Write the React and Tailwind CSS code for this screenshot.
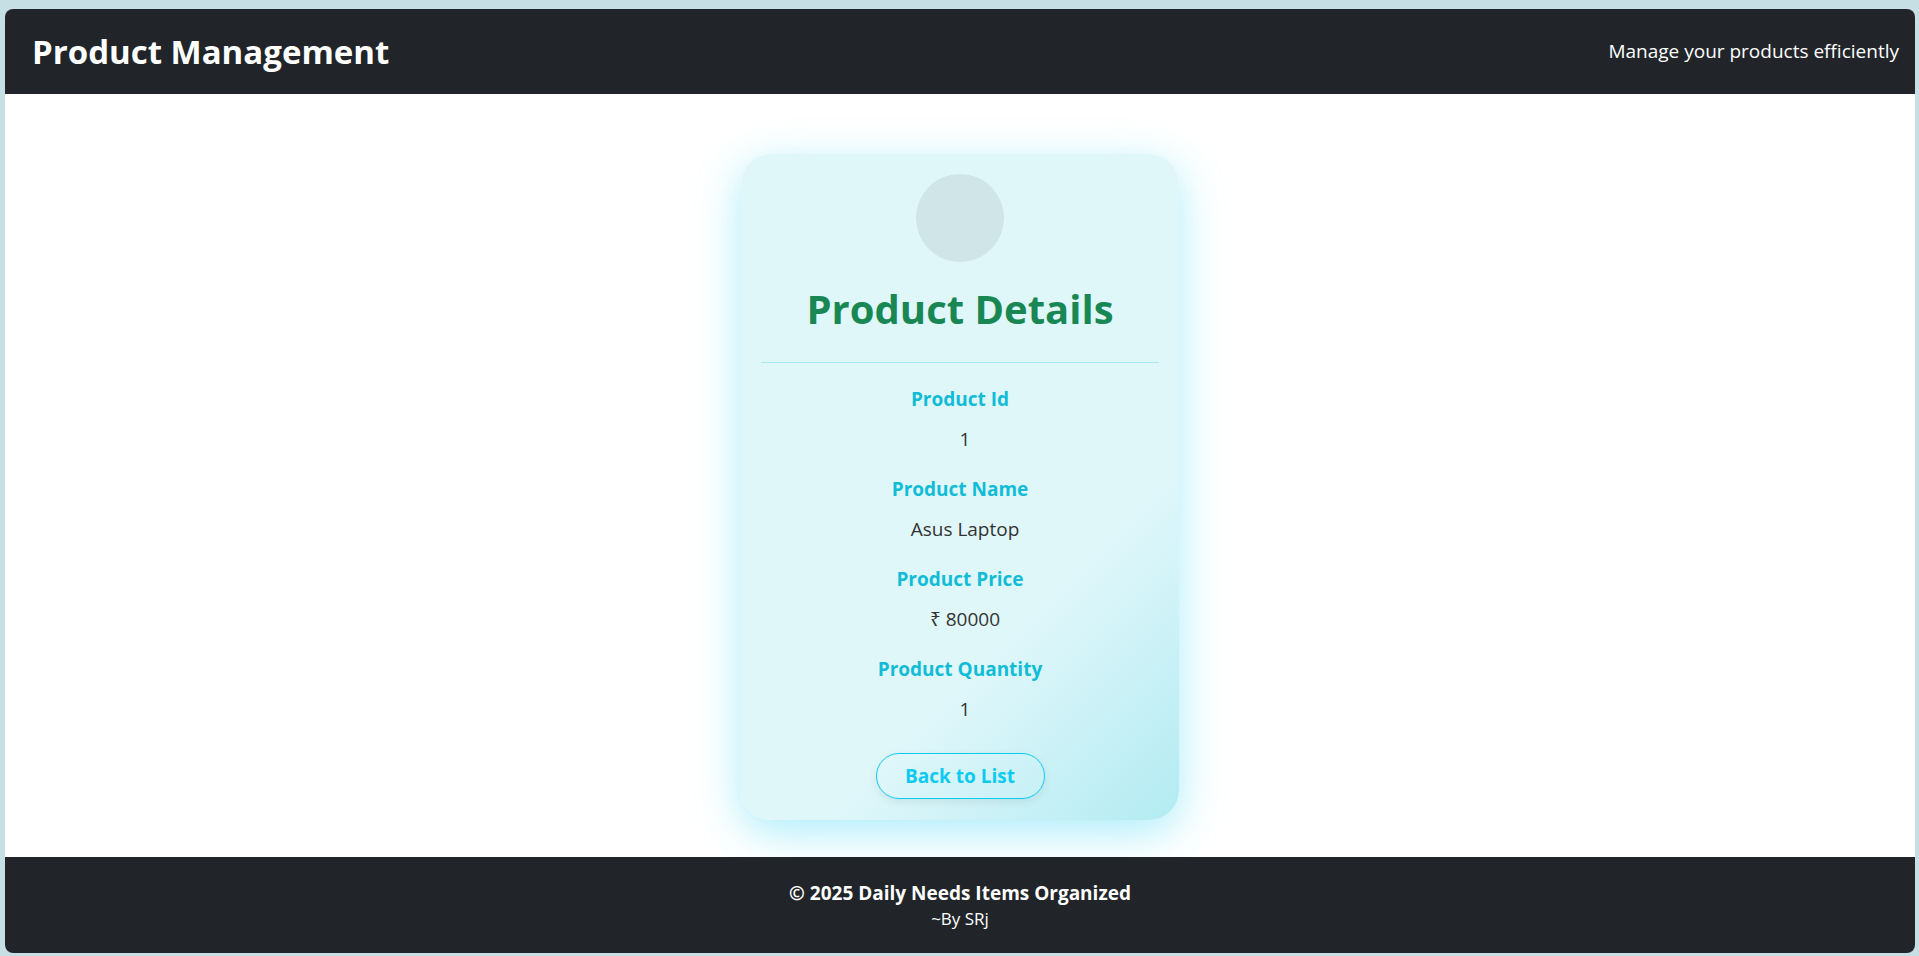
import React from "react";

const font = { fontFamily: '"Open Sans", "Noto Sans", sans-serif' };

function Field({ label, value }) {
  return (
    <div className="flex flex-col items-center">
      <div className="text-[19px] font-bold text-[#10bcd6] leading-[28px]">{label}</div>
      <div className="mt-[12px] pl-[10px] text-[19px] text-[#333] leading-[28px]">{value}</div>
    </div>
  );
}

export default function App() {
  return (
    <div className="min-h-screen bg-[#c6dfe4] pt-[9px] pl-[5px] pr-[4px] pb-[3px] flex" style={font}>
      <div className="flex-1 flex flex-col rounded-lg overflow-hidden bg-white">
        <header className="h-[85px] bg-[#212529] flex items-center justify-between pl-[27px] pr-[16px]">
          <h1 className="text-[33px] font-bold text-white">Product Management</h1>
          <span className="text-[19px] text-white">Manage your products efficiently</span>
        </header>

        <main className="flex-1 flex justify-center pt-[60px]">
          <div className="w-[438px] h-[666px] rounded-[30px] bg-[linear-gradient(135deg,#e0f7fa_0%,#e0f7fa_68%,#b2ebf2_100%)] shadow-[0_12px_44px_rgba(13,202,240,0.35)] px-[20px] pt-[20px] flex flex-col items-center">
            <div className="w-[88px] h-[88px] rounded-full bg-[#d0e5e8]" />
            <h2 className="mt-[22px] text-[40px] font-bold text-[#198754] leading-[50px]">Product Details</h2>
            <div className="mt-[28px] w-full h-px bg-[#a7e9f3]" />
            <div className="mt-[22px] flex flex-col gap-[22px]">
              <Field label="Product Id" value="1" />
              <Field label="Product Name" value="Asus Laptop" />
              <Field label="Product Price" value="₹ 80000" />
              <Field label="Product Quantity" value="1" />
            </div>
            <button className="mt-[30px] w-[169px] h-[46px] rounded-full border border-[#0dcaf0] text-[#0dcaf0] text-[19px] font-bold shadow-[0_3px_8px_rgba(0,0,0,0.08)]">
              Back to List
            </button>
          </div>
        </main>

        <footer className="h-[96px] bg-[#212529] flex flex-col items-center justify-center text-white">
          <div className="text-[19px] font-bold leading-[28px]">© 2025 Daily Needs Items Organized</div>
          <div className="text-[17px] leading-[24px]">~By SRj</div>
        </footer>
      </div>
    </div>
  );
}
